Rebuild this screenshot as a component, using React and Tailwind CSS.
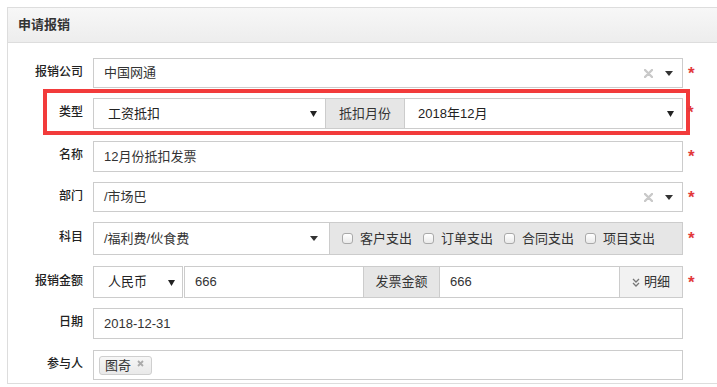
import React from 'react';

const Star = ({ className = '' }) => (
  <span className={`w-[8px] text-[17px] font-bold leading-none text-[#e2383b] ${className}`}>*</span>
);

const Caret = () => (
  <svg width="8" height="5" viewBox="0 0 8 5" className="shrink-0">
    <path d="M0 0h8L4 5z" fill="#333" />
  </svg>
);

const SelectArrow = () => (
  <svg width="7" height="7" viewBox="0 0 7 7" className="shrink-0">
    <path d="M0 1h7L3.5 7z" fill="#222" />
  </svg>
);

const ClearX = () => (
  <svg width="9" height="9" viewBox="0 0 9 9" className="shrink-0">
    <path d="M1 1l7 7M8 1L1 8" stroke="#c9c9c9" strokeWidth="2.4" strokeLinecap="round" />
  </svg>
);

const Check = ({ label }) => (
  <span className="mr-[11px] flex items-center gap-[7px]">
    <span className="h-[11px] w-[11px] rounded-[3px] border border-[#a9a9a9] bg-gradient-to-b from-white to-[#eaeaea]" />
    <span className="text-[13px] text-[#333]">{label}</span>
  </span>
);

const Label = ({ children, className = 'w-[75px]' }) => (
  <label className={`${className} mb-[3px] shrink-0 text-right text-[12px] font-medium text-[#222]`}>{children}</label>
);

const Select2 = ({ value, clear = true }) => (
  <div className="flex h-full w-[590px] items-center border border-[#ccc] bg-white pl-[10px] pr-[9px]">
    <span className="flex-1 text-[13px] text-[#333]">{value}</span>
    {clear && <ClearX />}
    <span className="ml-[12px]">
      <Caret />
    </span>
  </div>
);

export default function App() {
  return (
    <div className="h-[387px] w-[717px] overflow-hidden bg-white pl-[7px] pt-[7px] font-['Liberation_Sans','Noto_Sans_CJK_SC',sans-serif]">
      <div className="w-[730px] border border-[#ddd]">
        <div className="flex h-[35px] items-center border-b border-[#ddd] bg-gradient-to-b from-[#f7f7f7] to-[#ededed] pl-[10px]">
          <h3 className="text-[13px] font-bold text-[#333]">申请报销</h3>
        </div>

        <div className="flex h-[340px] flex-col pt-[15px]">
          {/* 报销公司 */}
          <div className="flex h-[30px] items-center">
            <Label>报销公司</Label>
            <div className="ml-[10px] h-full">
              <Select2 value="中国网通" />
            </div>
            <Star className="ml-[5px]" />
          </div>

          {/* 类型 - highlighted */}
          <div className="mt-[1px] flex items-center">
            <div className="ml-[35px] flex h-[46px] items-start border-[4px] border-[#f23b3b] pr-[3px] pt-[5px]">
              <div className="flex h-[31px] items-center">
                <Label className="w-[36px]">类型</Label>
                <div className="ml-[10px] flex h-full">
                  <div className="flex w-[233px] items-center border border-[#ccc] bg-white pl-[14px] pr-[8px]">
                    <span className="flex-1 text-[13px] text-[#222]">工资抵扣</span>
                    <SelectArrow />
                  </div>
                  <div className="flex w-[78px] items-center justify-center border-y border-[#ccc] bg-[#e6e6e6] text-[13px] text-[#333]">
                    抵扣月份
                  </div>
                  <div className="flex w-[279px] items-center border border-[#ccc] bg-white pl-[13px] pr-[8px]">
                    <span className="flex-1 text-[13px] text-[#222]">2018年12月</span>
                    <SelectArrow />
                  </div>
                </div>
              </div>
            </div>
            <Star className="-ml-[3px]" />
          </div>

          {/* 名称 */}
          <div className="mt-[6px] flex h-[31px] items-center">
            <Label>名称</Label>
            <div className="ml-[10px] flex h-full w-[590px] items-center border border-[#ccc] bg-white pl-[10px] text-[13px] text-[#333]">
              12月份抵扣发票
            </div>
            <Star className="ml-[5px]" />
          </div>

          {/* 部门 */}
          <div className="mt-[10px] flex h-[30px] items-center">
            <Label>部门</Label>
            <div className="ml-[10px] h-full">
              <Select2 value="/市场巴" />
            </div>
            <Star className="ml-[5px]" />
          </div>

          {/* 科目 */}
          <div className="mt-[10px] flex h-[33px] items-center">
            <Label>科目</Label>
            <div className="ml-[10px] flex h-full">
              <div className="flex w-[237px] items-center border border-[#ccc] bg-white pl-[10px] pr-[11px]">
                <span className="flex-1 text-[13px] text-[#333]">/福利费/伙食费</span>
                <Caret />
              </div>
              <div className="flex w-[353px] items-center border-y border-r border-[#ccc] bg-[#e6e6e6] pl-[12px]">
                <Check label="客户支出" />
                <Check label="订单支出" />
                <Check label="合同支出" />
                <Check label="项目支出" />
              </div>
            </div>
            <Star className="ml-[5px]" />
          </div>

          {/* 报销金额 */}
          <div className="mt-[11px] flex h-[32px] items-center">
            <Label>报销金额</Label>
            <div className="ml-[10px] flex h-full">
              <div className="flex w-[90px] items-center border border-[#ccc] bg-white pl-[14px] pr-[7px]">
                <span className="flex-1 text-[13px] text-[#222]">人民币</span>
                <SelectArrow />
              </div>
              <div className="ml-[1px] flex w-[179px] items-center border-y border-l border-[#ccc] bg-white pl-[10px] text-[13px] text-[#333]">
                666
              </div>
              <div className="flex w-[77px] items-center justify-center border border-[#ccc] bg-[#e6e6e6] text-[13px] text-[#333]">
                发票金额
              </div>
              <div className="flex w-[179px] items-center border-y border-[#ccc] bg-white pl-[10px] text-[13px] text-[#333]">
                666
              </div>
              <button className="flex w-[64px] items-center justify-center gap-[4px] border border-[#ccc] bg-[#f2f2f2] text-[13px] text-[#333]">
                <svg width="8" height="9" viewBox="0 0 8 9">
                  <path d="M1 1l3 3 3-3M1 5l3 3 3-3" fill="none" stroke="#777" strokeWidth="1.3" />
                </svg>
                明细
              </button>
            </div>
            <Star className="ml-[5px]" />
          </div>

          {/* 日期 */}
          <div className="mt-[10px] flex h-[31px] items-center">
            <Label>日期</Label>
            <div className="ml-[10px] flex h-full w-[590px] items-center border border-[#ccc] bg-white pl-[10px] text-[13px] text-[#333]">
              2018-12-31
            </div>
          </div>

          {/* 参与人 */}
          <div className="mt-[11px] flex h-[30px] items-center">
            <Label>参与人</Label>
            <div className="ml-[10px] flex h-full w-[590px] items-center border border-[#ccc] bg-white pl-[5px]">
              <span className="flex h-[19px] items-start gap-[6px] rounded-[3px] border border-[#cfcfcf] bg-gradient-to-b from-[#f6f6f6] to-[#e9e9e9] pl-[5px] pr-[7px]">
                <span className="self-center text-[13px] leading-none text-[#333]">图奇</span>
                <svg width="7" height="7" viewBox="0 0 7 7" className="mt-[3px]">
                  <path d="M1 1l5 5M6 1L1 6" stroke="#aaa" strokeWidth="1.8" />
                </svg>
              </span>
            </div>
          </div>
        </div>
      </div>
    </div>
  );
}
